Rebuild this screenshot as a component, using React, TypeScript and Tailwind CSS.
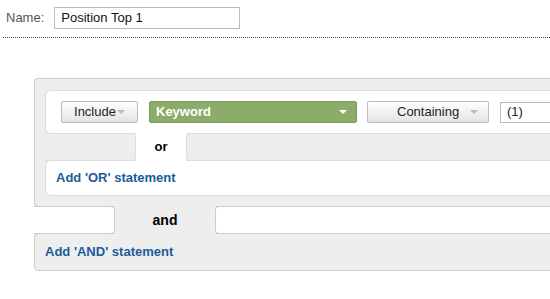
import clsx from 'clsx'

function Caret({ color }: { color: string }) {
  return (
    <span
      className={clsx(
        'inline-block w-0 h-0 border-l-[4px] border-r-[4px] border-t-[4px] border-l-transparent border-r-transparent',
        color
      )}
    />
  )
}

export default function App() {
  return (
    <div className="w-[550px] h-[299px] overflow-hidden bg-white font-['Liberation_Sans',Arial,sans-serif]">
      {/* Name */}
      <div className="flex items-center pt-[7px] pl-[6px]">
        <span className="text-[13px] text-[#555]">Name:</span>
        <div className="ml-[10px] w-[186px] h-[22px] border border-[#bbb] flex items-center pl-[6px] text-[13px] text-[#111]">
          Position Top 1
        </div>
      </div>
      <div className="mt-[8px] ml-[3px] border-t border-dotted border-[#444]" />

      {/* Rules */}
      <div className="ml-[34px] mt-[40px] w-[620px]">
        <div className="rounded-[4px] border border-[#ccc] bg-[#eee] pt-[11px] px-[10px] pb-[10px]">
          <div className="h-[44px] rounded-[6px] border border-[#ddd] bg-white flex items-center pl-[15px]">
            <div className="w-[77px] h-[22px] border border-[#bbb] rounded-[2px] bg-gradient-to-b from-white to-[#e4e4e4] flex items-center justify-center gap-[1px] text-[13px] text-[#222]">
              Include
              <Caret color="border-t-[#bbb]" />
            </div>
            <div className="ml-[11px] w-[208px] h-[22px] border border-[#7d9c5c] rounded-[2px] bg-[#8cac69] flex items-center justify-between pl-[6px] pr-[9px] text-[13px] font-bold text-white">
              Keyword
              <Caret color="border-t-white" />
            </div>
            <div className="ml-[10px] w-[122px] h-[22px] border border-[#bbb] rounded-[2px] bg-gradient-to-b from-white to-[#e4e4e4] flex items-center pl-[29px] pr-[10px] justify-between text-[13px] text-[#222]">
              Containing
              <Caret color="border-t-[#bbb]" />
            </div>
            <div className="ml-[11px] w-[100px] h-[21px] border border-[#bbb] flex items-center pl-[6px] text-[13px] text-[#222]">
              (1)
            </div>
          </div>

          <div className="flex h-[28px] -my-px">
            <div className="w-[91px] bg-[#eee] border-y border-r border-[#ddd] rounded-r-[5px]" />
            <div className="w-[50px] bg-white flex items-center justify-center text-[13px] font-bold text-black">
              or
            </div>
            <div className="flex-1 bg-[#eee] border-y border-l border-[#ddd] rounded-l-[5px]" />
          </div>

          <div className="h-[36px] rounded-[6px] border border-[#ddd] bg-white flex items-center pl-[10px] text-[13px] font-bold text-[#1b5c9b]">
            Add 'OR' statement
          </div>
        </div>

        <div className="flex h-[28px] -my-px">
          <div className="w-[81px] bg-white border-y border-r border-[#ccc] rounded-r-[4px]" />
          <div className="w-[100px] bg-[#eee] flex items-center justify-center text-[14px] font-bold text-black">
            and
          </div>
          <div className="flex-1 bg-white border-y border-l border-[#ccc] rounded-l-[4px]" />
        </div>

        <div className="h-[38px] rounded-[4px] border border-[#ccc] bg-[#eee] flex items-center pl-[10px] text-[13px] font-bold text-[#1b5c9b]">
          Add 'AND' statement
        </div>
      </div>
    </div>
  )
}
